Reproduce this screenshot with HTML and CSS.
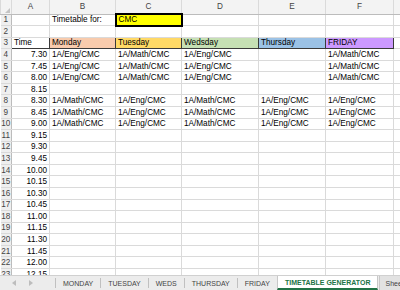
FILE: index.html
```html
<!DOCTYPE html>
<html lang="en">
<head>
    <meta charset="UTF-8">
    <title>Timetable Generator</title>
    <link rel="stylesheet" href="styles.css">
</head>
<body>

    <div class="sheet">
        <table class="grid">
            <colgroup>
                <col class="col-num">
                <col class="col-a">
                <col class="col-b">
                <col class="col-c">
                <col class="col-d">
                <col class="col-e">
                <col class="col-f">
                <col class="col-g">
            </colgroup>
            <thead>
                <tr class="heads">
                    <th class="corner"><span class="corner-mark"></span></th>
                    <th>A</th><th>B</th><th>C</th><th>D</th><th>E</th><th>F</th><th></th>
                </tr>
            </thead>
            <tbody>
                <tr><th>1</th><td></td><td>Timetable for:</td><td class="pick">CMC</td><td></td><td></td><td></td><td></td></tr>
                <tr><th>2</th><td></td><td></td><td></td><td></td><td></td><td></td><td></td></tr>
                <tr class="days">
                    <th>3</th>
                    <td class="box">Time</td>
                    <td class="box mon">Monday</td>
                    <td class="box tue">Tuesday</td>
                    <td class="box wed">Wedsday</td>
                    <td class="box thu">Thursday</td>
                    <td class="box fri">FRIDAY</td>
                    <td></td>
                </tr>
                <tr><th>4</th><td class="num">7.30</td><td>1A/Eng/CMC</td><td>1A/Math/CMC</td><td>1A/Eng/CMC</td><td></td><td>1A/Math/CMC</td><td></td></tr>
                <tr><th>5</th><td class="num">7.45</td><td>1A/Eng/CMC</td><td>1A/Math/CMC</td><td>1A/Eng/CMC</td><td></td><td>1A/Math/CMC</td><td></td></tr>
                <tr><th>6</th><td class="num">8.00</td><td>1A/Eng/CMC</td><td>1A/Math/CMC</td><td>1A/Eng/CMC</td><td></td><td>1A/Math/CMC</td><td></td></tr>
                <tr><th>7</th><td class="num">8.15</td><td></td><td></td><td></td><td></td><td></td><td></td></tr>
                <tr><th>8</th><td class="num">8.30</td><td>1A/Math/CMC</td><td>1A/Eng/CMC</td><td>1A/Math/CMC</td><td>1A/Eng/CMC</td><td>1A/Eng/CMC</td><td></td></tr>
                <tr><th>9</th><td class="num">8.45</td><td>1A/Math/CMC</td><td>1A/Eng/CMC</td><td>1A/Math/CMC</td><td>1A/Eng/CMC</td><td>1A/Eng/CMC</td><td></td></tr>
                <tr><th>10</th><td class="num">9.00</td><td>1A/Math/CMC</td><td>1A/Eng/CMC</td><td>1A/Math/CMC</td><td>1A/Eng/CMC</td><td>1A/Eng/CMC</td><td></td></tr>
                <tr><th>11</th><td class="num">9.15</td><td></td><td></td><td></td><td></td><td></td><td></td></tr>
                <tr><th>12</th><td class="num">9.30</td><td></td><td></td><td></td><td></td><td></td><td></td></tr>
                <tr><th>13</th><td class="num">9.45</td><td></td><td></td><td></td><td></td><td></td><td></td></tr>
                <tr><th>14</th><td class="num">10.00</td><td></td><td></td><td></td><td></td><td></td><td></td></tr>
                <tr><th>15</th><td class="num">10.15</td><td></td><td></td><td></td><td></td><td></td><td></td></tr>
                <tr><th>16</th><td class="num">10.30</td><td></td><td></td><td></td><td></td><td></td><td></td></tr>
                <tr><th>17</th><td class="num">10.45</td><td></td><td></td><td></td><td></td><td></td><td></td></tr>
                <tr><th>18</th><td class="num">11.00</td><td></td><td></td><td></td><td></td><td></td><td></td></tr>
                <tr><th>19</th><td class="num">11.15</td><td></td><td></td><td></td><td></td><td></td><td></td></tr>
                <tr><th>20</th><td class="num">11.30</td><td></td><td></td><td></td><td></td><td></td><td></td></tr>
                <tr><th>21</th><td class="num">11.45</td><td></td><td></td><td></td><td></td><td></td><td></td></tr>
                <tr><th>22</th><td class="num">12.00</td><td></td><td></td><td></td><td></td><td></td><td></td></tr>
                <tr><th>23</th><td class="num">12.15</td><td></td><td></td><td></td><td></td><td></td><td></td></tr>
            </tbody>
        </table>
    </div>

    <div class="tabs">
        <div class="tab-nav">
            <svg width="4" height="6" viewBox="0 0 4 6"><path d="M4 0 L0 3 L4 6 Z" fill="#bdbdbd"/></svg>
            <svg width="4" height="6" viewBox="0 0 4 6"><path d="M0 0 L4 3 L0 6 Z" fill="#bdbdbd"/></svg>
        </div>
        <div class="tab">MONDAY</div>
        <div class="tab">TUESDAY</div>
        <div class="tab">WEDS</div>
        <div class="tab">THURSDAY</div>
        <div class="tab">FRIDAY</div>
        <div class="tab active">TIMETABLE GENERATOR</div>
        <div class="tab next">Sheet1</div>
    </div>

</body>
</html>
```

FILE: styles.css
```css
body {
    margin: 0;
    width: 400px;
    height: 290px;
    overflow: hidden;
    background-color: white;
    font-family: "Liberation Sans", Arial, sans-serif;
    font-size: 8.2px;
    color: #000;
}

.sheet {
    width: 400px;
    height: 275px;
    overflow: hidden;
}

.grid {
    border-collapse: collapse;
    table-layout: fixed;
    width: 430px;
}

.col-num { width: 11px; }
.col-a { width: 38px; }
.col-b { width: 66px; }
.col-c { width: 66px; }
.col-d { width: 77px; }
.col-e { width: 67px; }
.col-f { width: 68px; }
.col-g { width: 37px; }

.grid tbody tr {
    height: 11.57px;
}

.grid td,
.grid th {
    border: 1px solid #dadada;
    padding: 0 2px;
    line-height: 9px;
    white-space: nowrap;
    overflow: hidden;
    text-align: left;
    font-weight: normal;
}

/* column letters */
.heads {
    height: 14px;
}

.heads th {
    background-color: #f3f3f3;
    color: #444;
    text-align: center;
    border-bottom-color: #bcbcbc;
    border-top: none;
}

.corner {
    position: relative;
}

.corner-mark {
    position: absolute;
    right: 1px;
    bottom: 1px;
    border-left: 5px solid transparent;
    border-bottom: 5px solid #c4c4c4;
}

/* row numbers */
.grid tbody th {
    background-color: #efefef;
    color: #444;
    text-align: center;
    padding: 0;
    border-left: none;
    border-right-color: #bcbcbc;
}

.num {
    text-align: right !important;
}

.pick {
    background-color: #ffff00;
    border: 2px solid #000 !important;
}

.days .box {
    border: 1px solid #3a3a3a;
}

.mon { background-color: #f8cbad; }
.tue { background-color: #ffd966; }
.wed { background-color: #c6e0b4; }
.thu { background-color: #9bc2e6; }
.fri { background-color: #cc99ff; }

/* sheet tabs */
.tabs {
    display: flex;
    align-items: stretch;
    width: 400px;
    height: 15px;
    overflow: hidden;
    background-color: #ececec;
    border-top: 1px solid #d0d0d0;
    box-sizing: border-box;
    font-size: 7px;
    color: #444;
    white-space: nowrap;
}

.tab-nav {
    display: flex;
    align-items: center;
    gap: 13px;
    width: 55px;
    padding-left: 12px;
    box-sizing: border-box;
    flex-shrink: 0;
}

.tab {
    display: flex;
    align-items: center;
    padding: 0 7px;
    border-left: 1px solid #c0c0c0;
    margin: 2px 0;
    flex-shrink: 0;
}

.tab.active {
    margin: 0;
    padding: 0 7px;
    background-color: white;
    color: #217346;
    font-weight: bold;
    border-left: 1px solid #c8c8c8;
    border-right: 1px solid #c8c8c8;
    border-bottom: 2px solid #217346;
}

.tab.next {
    margin: 0 0 0 1px;
    padding: 0 5px;
    background-color: #e2e2e2;
    border-left: 1px solid #c8c8c8;
}
```
